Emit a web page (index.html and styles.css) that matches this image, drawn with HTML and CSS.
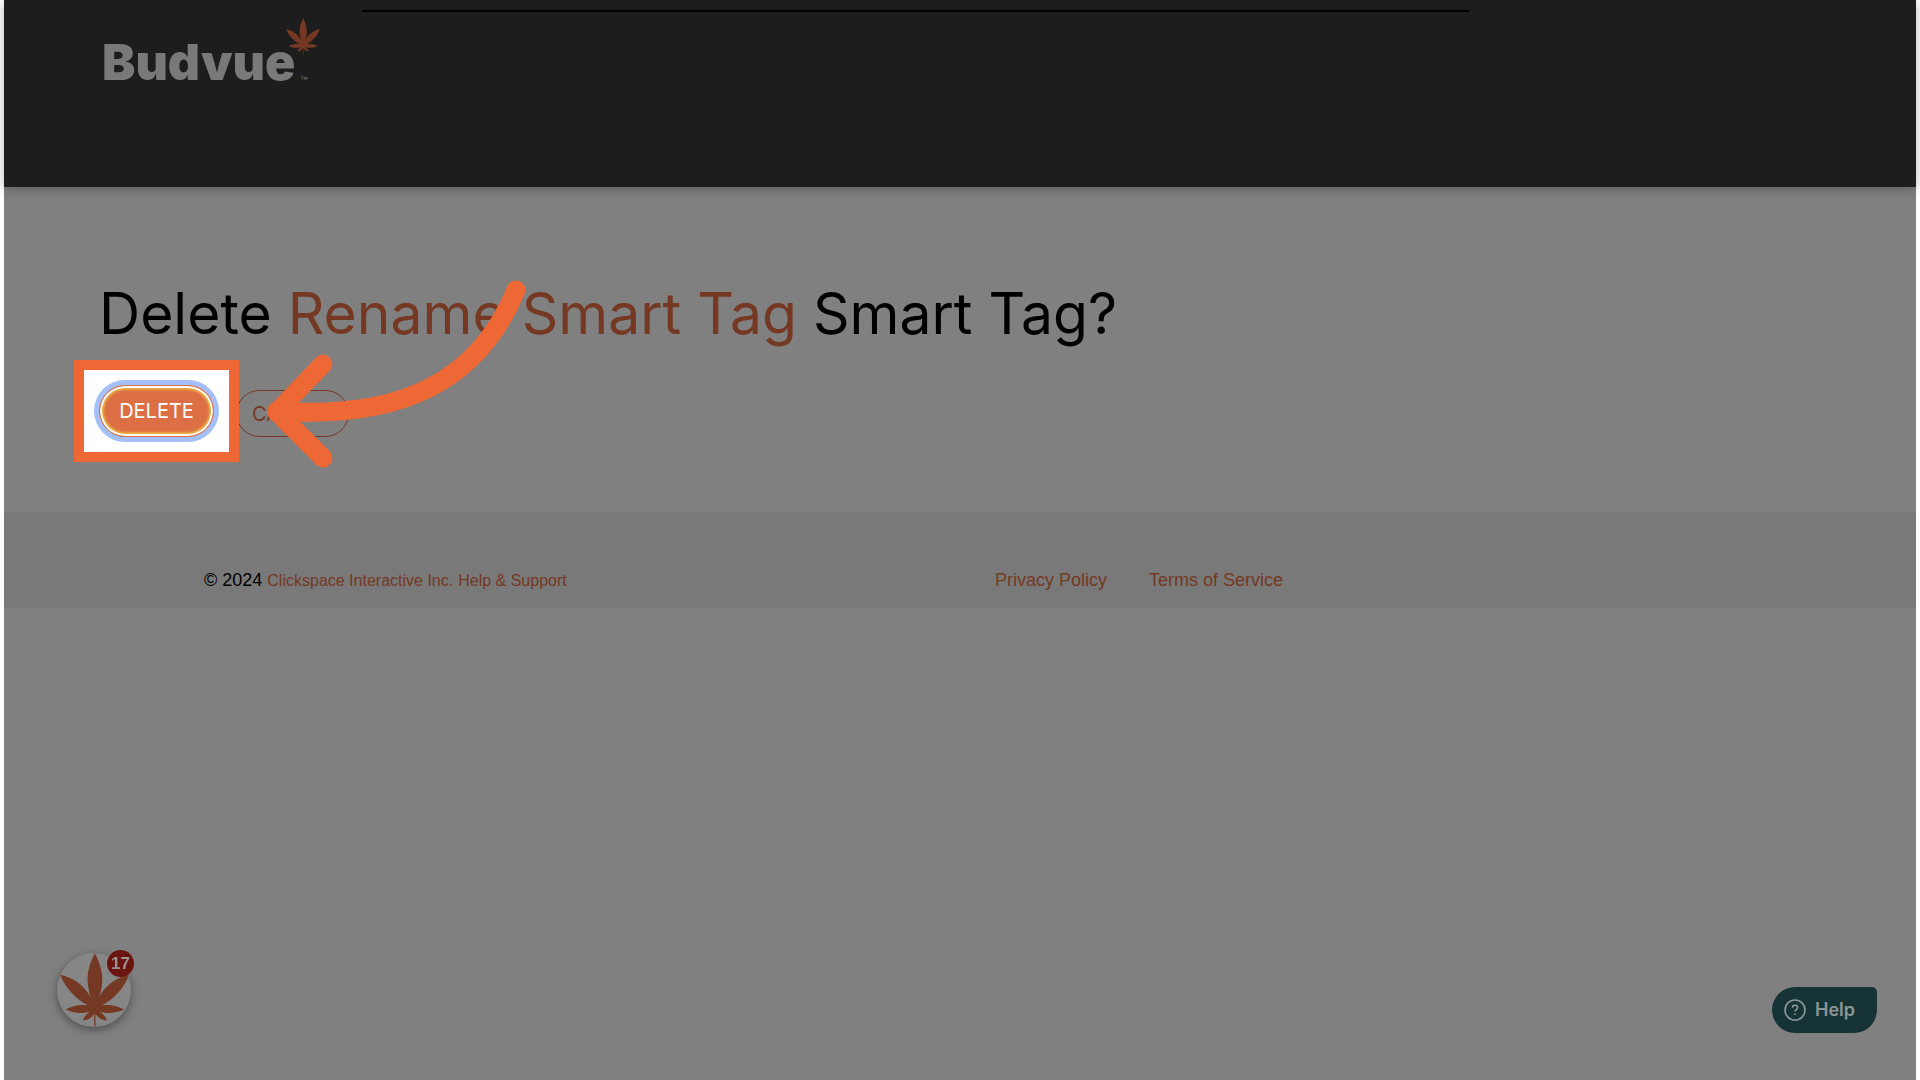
FILE: index.html
```
<!DOCTYPE html>
<html lang="en">
<head>
    <meta charset="UTF-8">
    <meta name="viewport" content="width=device-width, initial-scale=1.0">
    <title>Delete Smart Tag - Budvue</title>
    <link rel="stylesheet" href="styles.css">
</head>
<body>
    <svg class="sprite" aria-hidden="true">
        <symbol id="leaf" viewBox="60 68 208 222">
            <path d="M165 68C150 95 140 130 144 160C146 178 149 190 152 203C142 174 104 142 61 133C70 162 102 204 143 225C120 221 95 228 77 237C98 249 130 252 152 244C140 251 132 260 129 271C145 270 158 261 163 249L163 289H167L167 249C172 261 185 270 201 271C198 260 190 251 178 244C200 252 232 249 253 237C235 228 210 221 187 225C228 204 260 162 267 133C226 142 188 174 178 203C181 190 185 178 187 160C190 130 180 95 165 68Z"/>
        </symbol>
    </svg>

    <div class="page">
        <header class="header">
            <a href="#" class="logo" aria-label="Budvue home">
                <span class="logo-text">Budvue</span>
                <svg class="logo-leaf"><use href="#leaf"/></svg>
                <span class="logo-tm">™</span>
            </a>
            <nav class="menu"></nav>
        </header>

        <main class="content">
            <h1>Delete <span class="tag-name">Rename Smart Tag</span> Smart Tag?</h1>
            <div class="actions">
                <div class="spotlight">
                    <button type="button" class="btn btn-delete">DELETE</button>
                </div>
                <button type="button" class="btn btn-cancel">CANCEL</button>
                <svg class="arrow" viewBox="0 0 260 190" aria-hidden="true">
                    <path d="M249 20C212 110 136 150 10 141M56 94L10 142L56 188"/>
                </svg>
            </div>
        </main>

        <footer class="footer">
            <div class="copyright">© 2024 <a href="#">Clickspace Interactive Inc.</a> <a href="#">Help &amp; Support</a></div>
            <div class="legal">
                <a href="#">Privacy Policy</a>
                <a href="#">Terms of Service</a>
            </div>
        </footer>
    </div>

    <button type="button" class="news" aria-label="News, 17 unread">
        <svg class="news-leaf"><use href="#leaf"/></svg>
        <span class="news-count">17</span>
    </button>

    <button type="button" class="help">
        <svg class="help-icon" viewBox="0 0 22 22" aria-hidden="true">
            <circle cx="11" cy="11" r="10"/>
            <path d="M8.4 8.8C8.4 7.2 9.5 6.3 11 6.3S13.6 7.2 13.6 8.6C13.6 10.5 11 10.6 11 12.6M11 14.6V16"/>
        </svg>
        Help
    </button>
</body>
</html>
```
FILE: styles.css
```
* {
    margin: 0;
    padding: 0;
    box-sizing: border-box;
}

body {
    font-family: "Liberation Sans", Arial, sans-serif;
    background-color: #fff;
    color: #000;
    padding: 0 4px;
}

a {
    color: #743823;
    text-decoration: none;
}

button {
    border: none;
    cursor: pointer;
}

.sprite {
    display: none;
}

.page {
    min-height: 100vh;
    background-color: #808080;
}

/* Header */
.header {
    display: flex;
    align-items: flex-start;
    height: 187px;
    padding-left: 98px;
    background-color: #1d1d1d;
    box-shadow: 0 2px 10px rgba(0, 0, 0, 0.3);
}

.logo {
    position: relative;
    width: 260px;
    padding-top: 32px;
    color: #797979;
}

.logo-text {
    font-family: Inter, sans-serif;
    font-size: 50px;
    font-weight: 900;
    line-height: 60px;
}

.logo-leaf {
    position: absolute;
    top: 18px;
    left: 184px;
    width: 34px;
    height: 37px;
    fill: #743823;
}

.logo-tm {
    position: absolute;
    top: 76px;
    left: 198px;
    font-size: 8px;
    line-height: 8px;
}

.menu {
    width: 61%;
    margin-top: 10px;
    border-top: 2px solid #000;
}

/* Content */
.content {
    padding: 94px 95px 75px;
}

h1 {
    font-family: Inter, sans-serif;
    font-size: 57px;
    font-weight: 400;
    line-height: 66px;
}

.tag-name {
    color: #743823;
}

.actions {
    position: relative;
    display: flex;
    align-items: flex-end;
    gap: 22px;
    margin-top: 38px;
}

.btn {
    font-family: Inter, sans-serif;
    font-size: 20px;
    border-radius: 26px;
}

.btn-delete {
    display: block;
    position: relative;
    width: 115px;
    height: 52px;
    border: 1px solid #dd6f45;
    background-color: #dd6f45;
    color: #fff;
    box-shadow: 0 0 0 5px #a5bffb, inset 0 0 0 2px #fff, inset 0 0 2px 4px #e9ad43;
}

.btn-cancel {
    width: 113px;
    height: 47px;
    border: 1px solid #743823;
    background-color: transparent;
    color: #743823;
}

.spotlight {
    position: relative;
}

/* Highlight frame around the button */
.spotlight::before {
    content: "";
    position: absolute;
    inset: -25px;
    border: 10px solid #ee6835;
    background-color: #fff;
}

.arrow {
    position: absolute;
    top: -115px;
    left: 168px;
    width: 260px;
    height: 190px;
    overflow: visible;
    fill: none;
    stroke: #ee6835;
    stroke-width: 19;
    stroke-linecap: round;
    stroke-linejoin: round;
}

/* Footer */
.footer {
    display: grid;
    grid-template-columns: 1fr 1fr;
    align-items: baseline;
    height: 96px;
    padding: 57px 130px 0 200px;
    background-color: #797979;
    font-size: 18px;
    line-height: 22px;
}

.copyright a {
    font-size: 16px;
}

.legal {
    display: flex;
    gap: 42px;
}

/* Floating widgets */
.news {
    position: fixed;
    left: 57px;
    bottom: 53px;
    width: 74px;
    height: 74px;
    border-radius: 50%;
    background-color: #868686;
    box-shadow: 0 3px 10px rgba(0, 0, 0, 0.4);
}

.news-leaf {
    display: block;
    width: 69px;
    height: 74px;
    margin: 0 auto;
    fill: #743823;
}

.news-count {
    position: absolute;
    top: -3px;
    right: -3px;
    width: 27px;
    height: 27px;
    border-radius: 50%;
    background-color: #6b1410;
    color: #969696;
    font-family: "Liberation Sans", Arial, sans-serif;
    font-size: 17px;
    font-weight: 700;
    line-height: 27px;
}

.help {
    position: fixed;
    right: 43px;
    bottom: 47px;
    display: flex;
    align-items: center;
    gap: 9px;
    height: 46px;
    padding: 0 22px 1px 12px;
    border-radius: 23px 5px 23px 23px;
    background-color: #163335;
    color: #8b9697;
    font-family: Inter, sans-serif;
    font-size: 18px;
    font-weight: 600;
}

.help-icon {
    width: 22px;
    height: 22px;
    fill: none;
    stroke: #8b9697;
    stroke-width: 1.6;
}
```
